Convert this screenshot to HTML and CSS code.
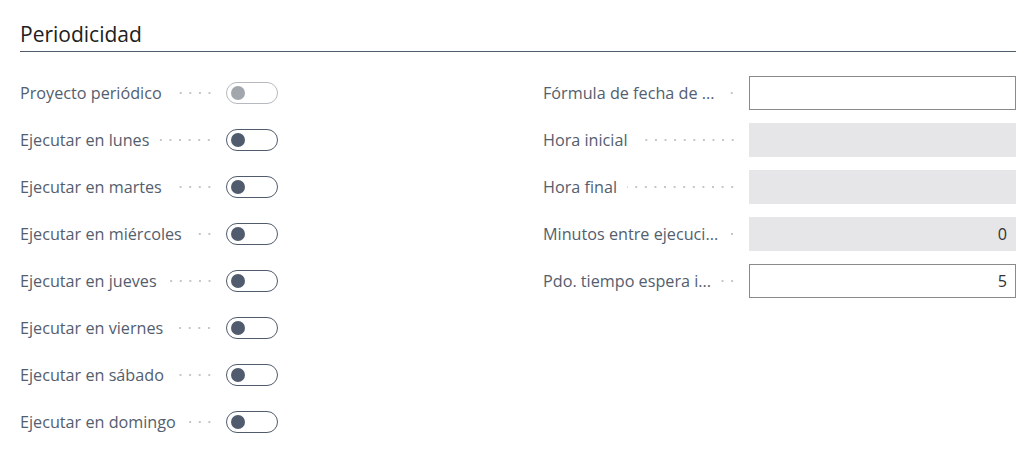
FILE: index.html
```html
<!DOCTYPE html>
<html lang="es">
<head>
<meta charset="utf-8">
<link rel="stylesheet" href="styles.css">
</head>
<body>
<section class="group">
  <h2 class="title">Periodicidad</h2>
  <div class="cols">
    <div class="col">
      <div class="field"><div class="label"><span class="text">Proyecto periódico</span><span class="dots"></span></div><span class="toggle disabled"><span class="knob"></span></span></div>
      <div class="field"><div class="label"><span class="text">Ejecutar en lunes</span><span class="dots"></span></div><span class="toggle"><span class="knob"></span></span></div>
      <div class="field"><div class="label"><span class="text">Ejecutar en martes</span><span class="dots"></span></div><span class="toggle"><span class="knob"></span></span></div>
      <div class="field"><div class="label"><span class="text">Ejecutar en miércoles</span><span class="dots"></span></div><span class="toggle"><span class="knob"></span></span></div>
      <div class="field"><div class="label"><span class="text">Ejecutar en jueves</span><span class="dots"></span></div><span class="toggle"><span class="knob"></span></span></div>
      <div class="field"><div class="label"><span class="text">Ejecutar en viernes</span><span class="dots"></span></div><span class="toggle"><span class="knob"></span></span></div>
      <div class="field"><div class="label"><span class="text">Ejecutar en sábado</span><span class="dots"></span></div><span class="toggle"><span class="knob"></span></span></div>
      <div class="field"><div class="label"><span class="text">Ejecutar en domingo</span><span class="dots"></span></div><span class="toggle"><span class="knob"></span></span></div>
    </div>
    <div class="col right">
      <div class="field"><div class="label"><span class="text">Fórmula de fecha de ...</span><span class="dots"></span></div><div class="input"></div></div>
      <div class="field"><div class="label"><span class="text">Hora inicial</span><span class="dots"></span></div><div class="input ro"></div></div>
      <div class="field"><div class="label"><span class="text">Hora final</span><span class="dots"></span></div><div class="input ro"></div></div>
      <div class="field"><div class="label"><span class="text">Minutos entre ejecuci...</span><span class="dots"></span></div><div class="input ro">0</div></div>
      <div class="field"><div class="label"><span class="text">Pdo. tiempo espera i...</span><span class="dots"></span></div><div class="input">5</div></div>
    </div>
  </div>
</section>
</body>
</html>
```
FILE: styles.css
```css
* { box-sizing: border-box; }
html, body { margin: 0; background: #fff; }
body {
  font-family: "Open Sans", "Noto Sans", sans-serif;
  color: #535e6e;
  width: 1032px;
  height: 470px;
  overflow: hidden;
}
.group { padding: 19px 16px 0 20px; }
.title {
  margin: 0;
  font-size: 21px;
  font-weight: 500;
  color: #212121;
  line-height: 30px;
  padding-bottom: 2px;
  border-bottom: 1px solid #505c6d;
}
.cols {
  display: flex;
  padding-top: 24px;
}
.col { display: flex; flex-direction: column; gap: 13px; width: 523px; }
.col.right { width: auto; flex: 1; }
.field { display: flex; align-items: center; height: 34px; gap: 12px; }
.label {
  width: 194px;
  display: flex;
  align-items: center;
  font-size: 16.2px;
  white-space: nowrap;
}
.text { flex: 0 0 auto; }
.dots {
  flex: 1 1 6px;
  min-width: 6px;
  margin-left: 10px;
  height: 4px;
  background-image: radial-gradient(circle, #c2c5ca 0.85px, transparent 1.25px);
  background-size: 9.6px 4px;
  background-repeat: repeat-x;
  background-position: right center;
}
.toggle {
  width: 52px;
  height: 22px;
  border: 1px solid #505c6d;
  border-radius: 11px;
  display: flex;
  align-items: center;
  padding-left: 4px;
}
.knob { width: 14px; height: 14px; border-radius: 50%; background: #505c6d; }
.toggle.disabled { border-color: #b6bac0; }
.toggle.disabled .knob { background: #a2a6ad; }
.input {
  flex: 1;
  height: 34px;
  border: 1px solid #8a8a8a;
  background: #fff;
  font-size: 16.2px;
  color: #333;
  text-align: right;
  padding: 0 8px;
  line-height: 32px;
}
.input.ro { border-color: #e6e6e8; background: #e6e6e8; }
```
